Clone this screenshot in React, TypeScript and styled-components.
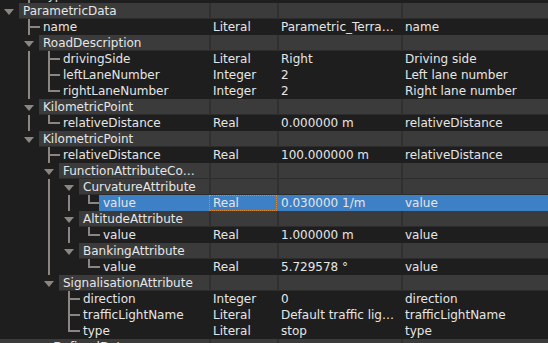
import styled, { createGlobalStyle } from 'styled-components';

const GlobalStyle = createGlobalStyle`
  html, body {
    margin: 0;
    padding: 0;
    background: #1e1e1e;
  }
`;

const color = {
  base: '#1e1e1e',
  group: '#3b3b3b',
  groupEdge: '#2c2c2c',
  separator: '#303030',
  selected: '#3e80c5',
  focus: '#e0892c',
  text: '#e6e6e6',
  branch: '#8c8580',
};

type Guide = 'blank' | 'line' | 'tee' | 'end' | 'arrow';
type Kind = 'group' | 'leaf';

interface Item {
  label: string;
  guides: Guide[];
  kind: Kind;
  type?: string;
  value?: string;
  desc?: string;
  selected?: boolean;
}

const items: Item[] = [
  { label: 'type', guides: ['blank', 'tee'], kind: 'leaf' },
  { label: 'ParametricData', guides: ['arrow'], kind: 'group' },
  { label: 'name', guides: ['blank', 'tee'], kind: 'leaf', type: 'Literal', value: 'Parametric_Terra…', desc: 'name' },
  { label: 'RoadDescription', guides: ['blank', 'arrow'], kind: 'group' },
  { label: 'drivingSide', guides: ['blank', 'line', 'tee'], kind: 'leaf', type: 'Literal', value: 'Right', desc: 'Driving side' },
  { label: 'leftLaneNumber', guides: ['blank', 'line', 'tee'], kind: 'leaf', type: 'Integer', value: '2', desc: 'Left lane number' },
  { label: 'rightLaneNumber', guides: ['blank', 'line', 'end'], kind: 'leaf', type: 'Integer', value: '2', desc: 'Right lane number' },
  { label: 'KilometricPoint', guides: ['blank', 'arrow'], kind: 'group' },
  { label: 'relativeDistance', guides: ['blank', 'line', 'end'], kind: 'leaf', type: 'Real', value: '0.000000 m', desc: 'relativeDistance' },
  { label: 'KilometricPoint', guides: ['blank', 'arrow'], kind: 'group' },
  { label: 'relativeDistance', guides: ['blank', 'blank', 'tee'], kind: 'leaf', type: 'Real', value: '100.000000 m', desc: 'relativeDistance' },
  { label: 'FunctionAttributeCo…', guides: ['blank', 'blank', 'arrow'], kind: 'group' },
  { label: 'CurvatureAttribute', guides: ['blank', 'blank', 'line', 'arrow'], kind: 'group' },
  { label: 'value', guides: ['blank', 'blank', 'line', 'line', 'end'], kind: 'leaf', type: 'Real', value: '0.030000 1/m', desc: 'value', selected: true },
  { label: 'AltitudeAttribute', guides: ['blank', 'blank', 'line', 'arrow'], kind: 'group' },
  { label: 'value', guides: ['blank', 'blank', 'line', 'line', 'end'], kind: 'leaf', type: 'Real', value: '1.000000 m', desc: 'value' },
  { label: 'BankingAttribute', guides: ['blank', 'blank', 'line', 'arrow'], kind: 'group' },
  { label: 'value', guides: ['blank', 'blank', 'line', 'blank', 'end'], kind: 'leaf', type: 'Real', value: '5.729578 °', desc: 'value' },
  { label: 'SignalisationAttribute', guides: ['blank', 'blank', 'arrow'], kind: 'group' },
  { label: 'direction', guides: ['blank', 'blank', 'blank', 'tee'], kind: 'leaf', type: 'Integer', value: '0', desc: 'direction' },
  { label: 'trafficLightName', guides: ['blank', 'blank', 'blank', 'tee'], kind: 'leaf', type: 'Literal', value: 'Default traffic lig…', desc: 'trafficLightName' },
  { label: 'type', guides: ['blank', 'blank', 'blank', 'end'], kind: 'leaf', type: 'Literal', value: 'stop', desc: 'type' },
  { label: 'userDefinedData', guides: [], kind: 'group' },
];

const Tree = styled.div`
  width: 548px;
  height: 343px;
  overflow: hidden;
  background: ${color.base};
  font-family: 'DejaVu Sans', Verdana, sans-serif;
  font-size: 12px;
  color: ${color.text};
`;

const Scroller = styled.div`
  margin-top: -13px;
`;

const Row = styled.div`
  display: flex;
  height: 16px;
  line-height: 16px;
  white-space: nowrap;
`;

const NameCell = styled.div`
  display: flex;
  width: 209px;
  flex: none;
  overflow: hidden;
`;

const Indent = styled.div`
  display: flex;
  flex: none;
  margin-right: -1px;
`;

const Label = styled.div<{ $kind: Kind; $selected?: boolean; $bare?: boolean }>`
  flex: 1;
  min-width: 0;
  padding-left: ${({ $bare }) => ($bare ? '28px' : '4px')};
  overflow: hidden;
  box-sizing: border-box;
  background: ${({ $kind, $selected }) =>
    $selected ? color.selected : $kind === 'group' ? color.group : 'transparent'};
  border-bottom: 1px solid ${({ $kind }) => ($kind === 'group' ? color.groupEdge : 'transparent')};
`;

const Cell = styled.div<{ $kind: Kind; $selected?: boolean; $width?: number; $focus?: boolean }>`
  position: relative;
  flex: ${({ $width }) => ($width ? 'none' : '1')};
  width: ${({ $width }) => ($width ? `${$width}px` : 'auto')};
  box-sizing: border-box;
  padding-left: 2px;
  overflow: hidden;
  border-left: 2px solid
    ${({ $kind, $selected }) =>
      $selected ? color.selected : $kind === 'group' ? color.separator : 'transparent'};
  border-bottom: 1px solid ${({ $kind }) => ($kind === 'group' ? color.groupEdge : 'transparent')};
  background: ${({ $kind, $selected }) =>
    $selected ? color.selected : $kind === 'group' ? color.group : 'transparent'};
  outline: ${({ $focus }) => ($focus ? `1px dotted ${color.focus}` : 'none')};
  outline-offset: -1px;
`;

function Branch({ kind }: { kind: Guide }) {
  return (
    <svg width="20" height="16" viewBox="0 0 20 16">
      {kind === 'line' && <rect x="8" y="0" width="2" height="16" fill={color.branch} />}
      {kind === 'tee' && (
        <>
          <rect x="8" y="0" width="2" height="16" fill={color.branch} />
          <rect x="10" y="7" width="10" height="2" fill={color.branch} />
        </>
      )}
      {kind === 'end' && (
        <>
          <rect x="8" y="0" width="2" height="9" fill={color.branch} />
          <rect x="10" y="7" width="10" height="2" fill={color.branch} />
        </>
      )}
      {kind === 'arrow' && <polygon points="4,6 14,6 9,12" fill={color.branch} />}
    </svg>
  );
}

function TreeRow({ item }: { item: Item }) {
  const { label, guides, kind, type, value, desc, selected } = item;

  return (
    <Row>
      <NameCell>
        <Indent>
          {guides.map((g, i) => (
            <Branch key={i} kind={g} />
          ))}
        </Indent>
        <Label $kind={kind} $selected={selected} $bare={guides.length === 0}>
          {label}
        </Label>
      </NameCell>
      <Cell $kind={kind} $selected={selected} $width={68} $focus={selected}>
        {type}
      </Cell>
      <Cell $kind={kind} $selected={selected} $width={124}>
        {value}
      </Cell>
      <Cell $kind={kind} $selected={selected}>
        {desc}
      </Cell>
    </Row>
  );
}

function App() {
  return (
    <>
      <GlobalStyle />
      <Tree>
        <Scroller>
          {items.map((item, i) => (
            <TreeRow key={i} item={item} />
          ))}
        </Scroller>
      </Tree>
    </>
  );
}

export default App;
